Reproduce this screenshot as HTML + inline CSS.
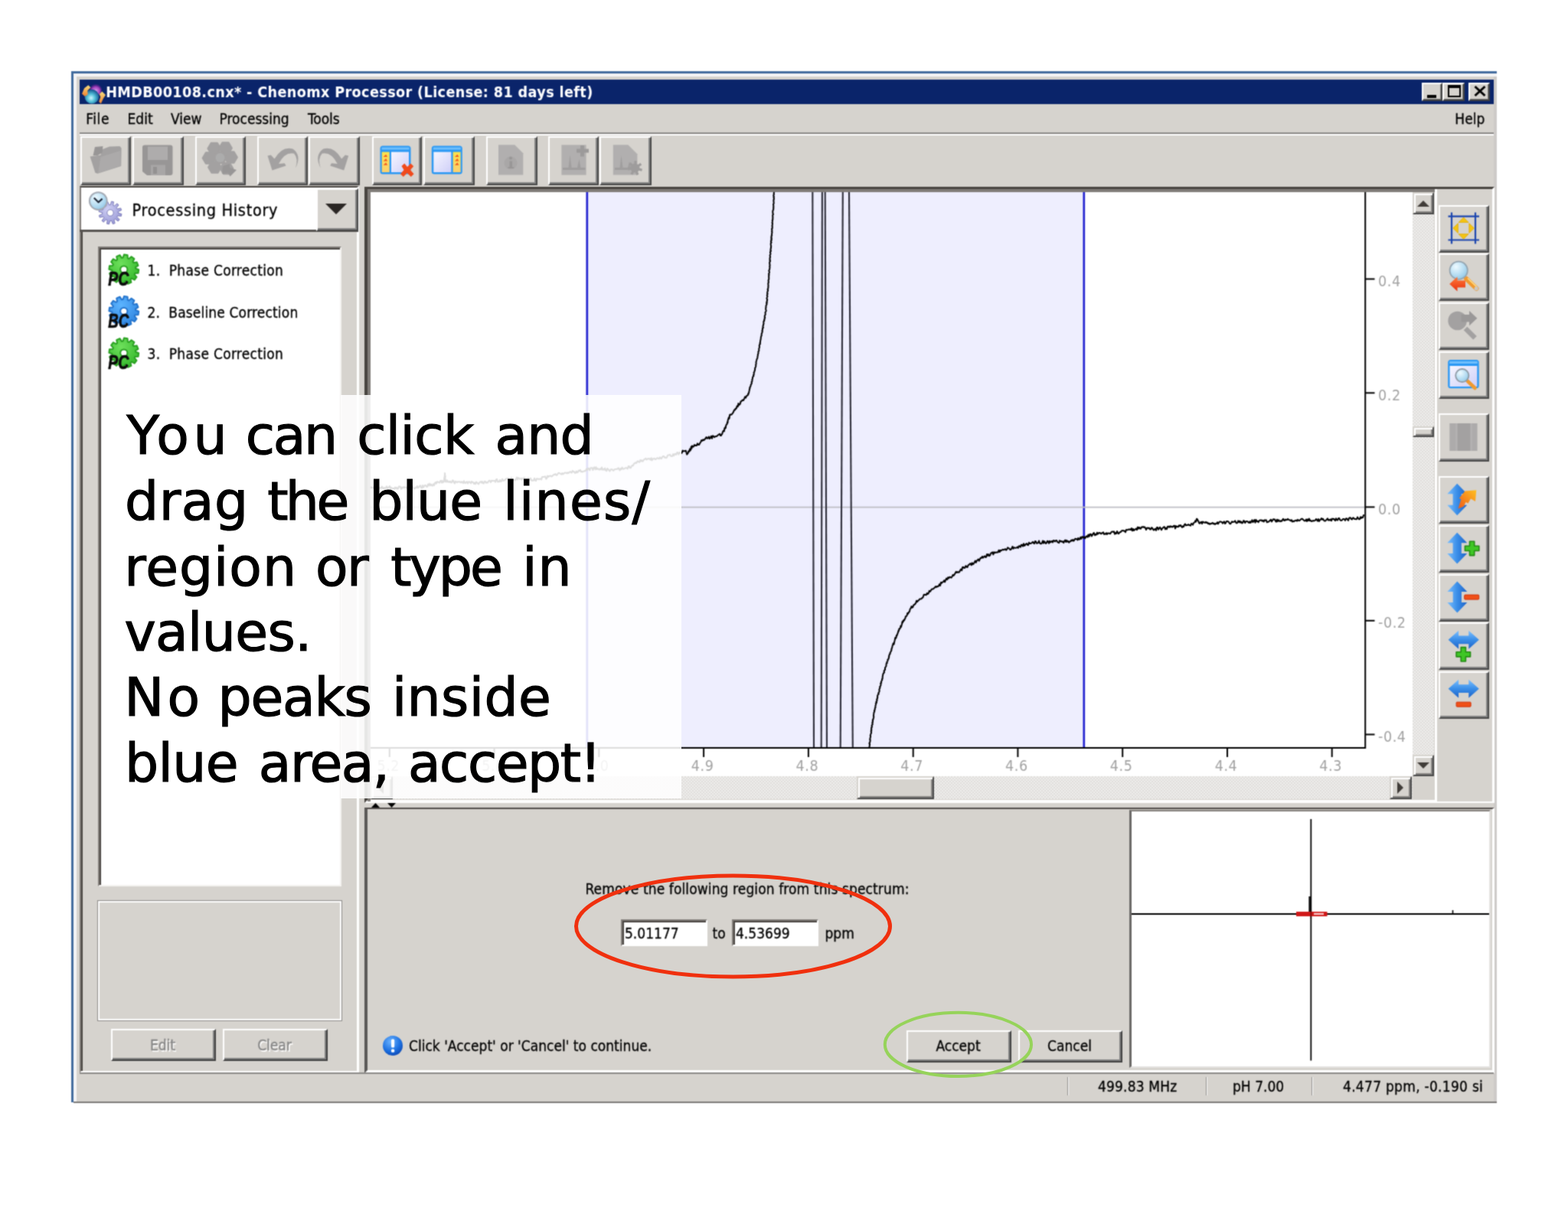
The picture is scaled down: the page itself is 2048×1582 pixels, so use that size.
<!DOCTYPE html>
<html lang="en">
<head>
<meta charset="utf-8">
<title>HMDB00108.cnx* - Chenomx Processor</title>
<style>
*{box-sizing:border-box;margin:0;padding:0}
html,body{width:2048px;height:1582px;background:#fff;overflow:hidden}
body{position:relative;-webkit-text-stroke:0.3px currentColor;font-family:"DejaVu Sans Condensed","DejaVu Sans","Liberation Sans",sans-serif;font-size:19px;color:#000}
.a{position:absolute}
.t{position:absolute;white-space:pre;line-height:1;filter:grayscale(1)}
svg text{filter:grayscale(1)}
.win{left:100px;top:100px;width:1851px;height:1339px;background:#d6d3ce}
.raised{position:absolute;background:#d6d3ce;border-style:solid;border-width:2px;border-color:#fff #404040 #404040 #fff;box-shadow:inset -2px -2px 0 #808080}
.raised2{position:absolute;background:#d6d3ce;border-style:solid;border-width:2px;border-color:#d6d3ce #484848 #484848 #d6d3ce;box-shadow:inset 2px 2px 0 #fff,inset -2px -2px 0 #868482}
.sunken{position:absolute;border-style:solid;border-width:2px;border-color:#808080 #fff #fff #808080;box-shadow:inset 2px 2px 0 #404040}
.tb{position:absolute;top:178px;width:66px;height:64px;background:#d6d3ce;border-style:solid;border-width:2px;border-color:#fff #484848 #484848 #fff;box-shadow:inset -2px -2px 0 #848484}
.rb{position:absolute;left:1879px;width:66px;height:62px;background:#d6d3ce;border-style:solid;border-width:2px;border-color:#fff #484848 #484848 #fff;box-shadow:inset -2px -2px 0 #848484}
.chk{background-color:#efeeec;background-image:linear-gradient(45deg,#dfdddb 25%,transparent 25%,transparent 75%,#dfdddb 75%),linear-gradient(45deg,#dfdddb 25%,transparent 25%,transparent 75%,#dfdddb 75%);background-size:4px 4px;background-position:0 0,2px 2px}
svg{position:absolute;overflow:visible}
</style>
</head>
<body>
<svg width="0" height="0" style="left:0;top:0"><defs><filter id="uisoft" x="0" y="0" width="100%" height="100%" color-interpolation-filters="sRGB"><feConvolveMatrix order="3" kernelMatrix="1 3 1 3 9 3 1 3 1" divisor="25" edgeMode="duplicate" preserveAlpha="false"/></filter></defs></svg>
<div class="a ui" style="left:0;top:0;width:2048px;height:1582px;filter:url(#uisoft)">
<!-- window frame -->
<div class="a" style="left:93px;top:93px;width:1862px;height:1347px;background:#416b9d"></div>
<div class="a" style="left:96px;top:96px;width:1859px;height:1344px;background:#f4f4f6"></div>
<div class="a win"></div>
<div class="a" style="left:1951px;top:100px;width:4px;height:1340px;background:#cdcac8"></div>
<div class="a" style="left:96px;top:1439px;width:1859px;height:2px;background:#7a7876"></div>

<!-- title bar -->
<div class="a" style="left:104px;top:104px;width:1847px;height:32px;background:#0a246a"></div>
<svg style="left:106px;top:105.5px" width="33" height="31" viewBox="0 0 32 30">
  <defs>
    <radialGradient id="gGlobe" cx="0.45" cy="0.6" r="0.6"><stop offset="0" stop-color="#d0f6ff"/><stop offset="0.45" stop-color="#52c0d8"/><stop offset="1" stop-color="#13508e"/></radialGradient>
    <radialGradient id="gPurp" cx="0.5" cy="0.6" r="0.6"><stop offset="0" stop-color="#dca8f6"/><stop offset="0.6" stop-color="#a03cb8"/><stop offset="1" stop-color="#4a1480" stop-opacity="0.3"/></radialGradient>
    <linearGradient id="gOr" x1="0" y1="0" x2="0" y2="1"><stop offset="0" stop-color="#f8e080"/><stop offset="1" stop-color="#f08030"/></linearGradient>
  </defs>
  <circle cx="18.5" cy="11" r="7.5" fill="url(#gPurp)"/>
  <circle cx="13.5" cy="19.5" r="9" fill="url(#gGlobe)"/>
  <path d="M1 16 L4 9 L9 5 L12 8 L8 12 L8.5 17 L4.5 19 Z" fill="url(#gOr)"/>
  <path d="M26.5 13 L31 17.5 L28 22 L25 28.5 L22.5 26 L24.5 20 L23 16.5 Z" fill="url(#gOr)"/>
</svg>
<div class="t" style="left:138.2px;top:110px;font-weight:bold;font-size:19.6px;letter-spacing:0.38px;color:#fff;-webkit-text-stroke:0;line-height:22px">HMDB00108.cnx* - Chenomx Processor (License: 81 days left)</div>
<!-- caption buttons -->
<div class="a" style="left:1857px;top:108px;width:27px;height:24px;background:#d6d3ce;border-style:solid;border-width:2px;border-color:#fff #404040 #404040 #fff;box-shadow:inset -1px -1px 0 #808080"></div>
<div class="a" style="left:1884px;top:108px;width:29px;height:24px;background:#d6d3ce;border-style:solid;border-width:2px;border-color:#fff #404040 #404040 #fff;box-shadow:inset -1px -1px 0 #808080"></div>
<div class="a" style="left:1918px;top:108px;width:28px;height:24px;background:#d6d3ce;border-style:solid;border-width:2px;border-color:#fff #404040 #404040 #fff;box-shadow:inset -1px -1px 0 #808080"></div>
<div class="a" style="left:1864px;top:124px;width:12px;height:4px;background:#000"></div>
<div class="a" style="left:1891px;top:111px;width:17px;height:16px;border:2px solid #000;border-top-width:4px"></div>
<svg style="left:1925px;top:112px" width="16" height="14" viewBox="0 0 16 14"><path d="M1.5 1 L14.5 13 M14.5 1 L1.5 13" stroke="#000" stroke-width="3" fill="none"/></svg>

<!-- menu bar -->
<div class="t" style="left:112.2px;top:144px;line-height:22px;letter-spacing:0.6px">File</div>
<div class="t" style="left:166.5px;top:144px;line-height:22px">Edit</div>
<div class="t" style="left:223px;top:144px;line-height:22px">View</div>
<div class="t" style="left:286.5px;top:144px;line-height:22px">Processing</div>
<div class="t" style="left:402px;top:144px;line-height:22px">Tools</div>
<div class="t" style="left:1900.2px;top:144px;line-height:22px;letter-spacing:0.1px">Help</div>
<div class="a" style="left:104px;top:173px;width:1847px;height:1.6px;background:#8a8886"></div>
<div class="a" style="left:104px;top:174.6px;width:1847px;height:2px;background:#fff"></div>

<!-- toolbar buttons -->
<div class="tb" style="left:105px"></div>
<div class="tb" style="left:173px;width:67px"></div>
<div class="tb" style="left:255px"></div>
<div class="tb" style="left:336px"></div>
<div class="tb" style="left:403px;width:67px"></div>
<div class="tb" style="left:486px;width:65px"></div>
<div class="tb" style="left:553px;width:67px"></div>
<div class="tb" style="left:635px;width:67px"></div>
<div class="tb" style="left:716px"></div>
<div class="tb" style="left:783px;width:68px"></div>
<!-- left panel -->
<div class="a" style="left:104px;top:242.5px;width:365.3px;height:1159.5px;border-style:solid;border-width:2px 3px 3px 2px;border-color:#46423e #fff #fff #807c78;box-shadow:inset 2px 0 0 #484440"></div>
<!-- combo -->
<div class="a" style="left:106px;top:244.5px;width:360px;height:56px;background:#fff"></div>
<div class="a" style="left:104px;top:299.5px;width:364.3px;height:3.6px;background:#55524f"></div>
<div class="a" style="left:412.5px;top:245.5px;width:55.8px;height:56px;background:#d6d3ce;border-style:solid;border-width:2px;border-color:#fff #484848 #484848 #fff;box-shadow:inset -2px -2px 0 #848484"></div>
<svg style="left:424px;top:265px" width="30" height="16" viewBox="0 0 30 16"><path d="M1 1 L29 1 L15 15 Z" fill="#2a2624"/></svg>
<div class="t" style="left:172.5px;top:262px;font-size:21.5px;letter-spacing:0.7px;line-height:26px">Processing History</div>
<!-- list box -->
<div class="a" style="left:128px;top:322px;width:318px;height:836px;background:#fff;border-style:solid;border-width:2px;border-color:#807c78 #f4f2f0 #f4f2f0 #807c78;box-shadow:inset 2px 2px 0 #484440"></div>
<div class="t" style="left:192.5px;top:342px;line-height:22px;letter-spacing:0.28px">1.  Phase Correction</div>
<div class="t" style="left:192.5px;top:396.5px;line-height:22px;letter-spacing:0.15px">2.  Baseline Correction</div>
<div class="t" style="left:192.5px;top:451px;line-height:22px;letter-spacing:0.28px">3.  Phase Correction</div>
<!-- group box -->
<div class="a" style="left:128px;top:1177px;width:318px;height:156px;border:2px solid #fff;box-shadow:0 0 0 1px #8a8886, inset 0 0 0 0 #fff"></div>
<!-- Edit / Clear -->
<div class="raised" style="left:145px;top:1344px;width:137px;height:42px"></div>
<div class="raised" style="left:291px;top:1344px;width:137px;height:42px"></div>
<div class="t" style="left:145px;top:1353px;width:135px;text-align:center;line-height:24px;color:#8a8784;text-shadow:1.5px 1.5px 0 #fff">Edit</div>
<div class="t" style="left:291px;top:1353px;width:135px;text-align:center;line-height:24px;color:#8a8784;text-shadow:1.5px 1.5px 0 #fff">Clear</div>
<!-- plot panel (sunken) -->
<div class="a" style="left:476px;top:244px;width:1476px;height:805px;border-style:solid;border-width:3px 3px 4px 4px;border-color:#484440 #fff #fff #484440"></div>
<div class="a" style="left:480px;top:247px;width:1394px;height:4px;background:#807c78"></div>
<div class="a" style="left:480px;top:247px;width:4px;height:800px;background:#807c78"></div>
<div class="a" style="left:484px;top:251px;width:1389px;height:793px;background:#fff"></div>
<!-- spectrum plot -->
<svg style="left:484px;top:251px" width="1361" height="763" viewBox="484 251 1361 763">
<rect x="484" y="251" width="1361" height="763" fill="#fff"/>
<rect x="767" y="251" width="649" height="726" fill="#eeeefe"/>
<line x1="766.8" y1="251" x2="766.8" y2="977" stroke="#2222d0" stroke-width="2.7"/>
<line x1="1415.8" y1="251" x2="1415.8" y2="977" stroke="#2222d0" stroke-width="2.7"/>
<line x1="484" y1="662.7" x2="1783" y2="662.7" stroke="#bdbdc4" stroke-width="1.8"/>
<line x1="1061.3" y1="251" x2="1063" y2="977" stroke="#2c2c38" stroke-width="2.1"/>
<line x1="1073.9" y1="251" x2="1072.7" y2="977" stroke="#2c2c38" stroke-width="2.1"/>
<line x1="1077.7" y1="251" x2="1080" y2="977" stroke="#2c2c38" stroke-width="2.1"/>
<line x1="1100.8" y1="251" x2="1097.7" y2="977" stroke="#2c2c38" stroke-width="2.1"/>
<line x1="1109" y1="251" x2="1113.8" y2="977" stroke="#2c2c38" stroke-width="2.1"/>
<path d="M484.0 636.0 L485.0 637.2 L486.0 636.5 L487.0 637.4 L488.0 637.5 L489.0 635.3 L490.0 635.1 L491.0 638.3 L492.0 636.0 L493.0 635.9 L494.0 639.0 L495.0 636.9 L496.0 638.3 L497.0 636.9 L498.0 637.6 L499.0 635.6 L500.0 637.5 L501.0 638.5 L502.0 637.1 L503.0 638.0 L504.0 637.7 L505.0 635.3 L506.0 638.0 L507.0 637.4 L508.0 636.2 L509.0 635.1 L510.0 638.5 L511.0 636.9 L512.0 637.9 L513.0 638.5 L514.0 637.9 L515.0 638.7 L516.0 636.6 L517.0 638.2 L518.0 636.8 L519.0 638.7 L520.0 638.5 L521.0 635.4 L522.0 635.5 L523.0 635.9 L524.0 638.9 L525.0 636.7 L526.0 637.5 L527.0 636.2 L528.0 637.0 L529.0 636.5 L530.0 636.4 L531.0 637.3 L532.0 637.3 L533.0 638.6 L534.0 637.7 L535.0 638.6 L536.0 638.2 L537.0 638.7 L538.0 637.3 L539.0 635.2 L540.0 637.9 L541.0 638.3 L542.0 638.0 L543.0 636.6 L544.0 637.1 L545.0 635.0 L546.0 637.4 L547.0 636.3 L548.0 635.1 L549.0 634.1 L550.0 637.2 L551.0 637.7 L552.0 634.0 L553.0 636.8 L554.0 635.1 L555.0 633.8 L556.0 634.2 L557.0 635.8 L558.0 635.9 L559.0 632.4 L560.0 634.4 L561.0 631.8 L562.0 634.3 L563.0 632.5 L564.0 634.4 L565.0 634.5 L566.0 632.4 L567.0 634.1 L568.0 631.1 L569.0 629.9 L570.0 631.7 L571.0 629.2 L572.0 629.6 L573.0 630.2 L574.0 630.7 L575.0 628.6 L576.0 627.8 L577.0 630.7 L578.0 628.1 L579.0 630.2 L580.4 628.0 L580.0 627.0 L580.2 626.0 L580.3 625.0 L580.5 624.0 L580.6 623.0 L580.7 622.0 L580.8 621.0 L581.2 620.0 L580.9 619.0 L580.9 618.0 L581.3 619.0 L580.9 620.0 L581.1 621.0 L581.8 622.0 L581.5 623.0 L581.6 624.0 L581.1 625.0 L581.6 626.0 L581.9 627.0 L581.4 628.0 L582.0 629.5 L583.0 629.6 L584.0 627.4 L585.0 629.7 L586.0 629.1 L587.0 630.0 L588.0 628.7 L589.0 630.2 L590.0 630.4 L591.0 627.6 L592.0 627.8 L593.0 630.3 L594.0 631.5 L595.0 628.7 L596.0 629.6 L597.0 630.2 L598.0 629.2 L599.0 629.4 L600.0 629.3 L601.0 629.5 L602.0 630.5 L603.0 629.3 L604.0 629.7 L605.0 631.3 L606.0 628.3 L607.0 630.6 L608.0 631.3 L609.0 629.6 L610.0 629.3 L611.0 631.7 L612.0 629.4 L613.0 629.3 L614.0 630.3 L615.0 631.4 L616.0 629.0 L617.0 630.0 L618.0 630.1 L619.0 632.1 L620.0 630.6 L621.0 632.3 L622.0 629.6 L623.0 630.3 L624.0 631.6 L625.0 632.5 L626.0 630.7 L627.0 629.6 L628.0 629.1 L629.0 630.6 L630.0 629.1 L631.0 631.4 L632.0 631.4 L633.0 628.7 L634.0 628.9 L635.0 630.9 L636.0 630.1 L637.0 630.6 L638.0 628.7 L639.0 627.7 L640.0 628.2 L641.0 630.1 L642.0 627.8 L643.0 628.0 L644.0 628.2 L645.0 628.0 L646.0 627.9 L647.0 629.8 L648.0 626.6 L649.0 625.8 L650.0 629.5 L651.0 629.1 L652.0 629.4 L653.0 627.0 L654.0 629.0 L655.0 628.7 L656.0 625.8 L657.0 627.7 L658.0 628.0 L659.0 627.2 L660.0 626.5 L661.0 625.5 L662.0 625.7 L663.0 625.2 L664.0 624.5 L665.0 626.5 L666.0 625.2 L667.0 627.3 L668.0 624.1 L669.0 627.5 L670.0 626.6 L671.0 627.5 L672.0 627.3 L673.0 627.3 L674.0 625.9 L675.0 623.6 L676.0 626.5 L677.0 624.1 L678.0 624.6 L679.0 626.0 L680.0 625.3 L681.0 624.8 L682.0 626.9 L683.0 625.5 L684.0 624.4 L685.0 624.1 L686.0 626.7 L687.0 625.3 L688.0 626.6 L689.0 625.0 L690.0 624.5 L691.0 626.0 L692.0 627.2 L693.0 624.7 L694.0 627.3 L695.0 628.0 L696.0 627.6 L697.0 627.8 L698.0 624.7 L699.0 627.3 L700.0 628.3 L701.0 625.2 L702.0 625.8 L703.0 625.5 L704.0 626.3 L705.1 625.6 L706.1 625.6 L707.1 626.5 L708.1 623.1 L709.1 623.1 L710.1 623.1 L711.1 622.8 L712.1 622.3 L713.2 625.7 L714.2 624.9 L715.2 621.6 L716.2 623.0 L717.2 622.0 L718.2 621.7 L719.2 621.6 L720.2 622.5 L721.3 622.0 L722.3 620.8 L723.3 619.9 L724.3 620.2 L725.3 619.1 L726.3 620.5 L727.3 620.9 L728.3 619.3 L729.4 617.8 L730.4 617.9 L731.4 618.5 L732.4 619.1 L733.4 619.7 L734.4 618.0 L735.5 619.5 L736.5 618.6 L737.5 617.7 L738.5 617.4 L739.5 617.7 L740.6 618.4 L741.6 617.2 L742.6 618.1 L743.6 617.1 L744.6 616.1 L745.7 617.1 L746.7 617.6 L747.7 615.0 L748.7 616.2 L749.7 616.1 L750.7 617.8 L751.8 617.9 L752.8 615.5 L753.8 617.4 L754.8 616.9 L755.8 614.6 L756.9 615.3 L757.9 613.8 L758.9 616.4 L759.9 615.7 L760.9 616.5 L762.0 615.9 L763.0 615.3 L764.0 615.4 L765.0 614.6 L766.1 612.5 L767.1 614.3 L768.2 611.7 L769.2 612.1 L770.3 614.4 L771.3 611.3 L772.4 611.3 L773.4 611.2 L774.4 614.1 L775.5 611.1 L776.5 610.3 L777.6 613.3 L778.6 610.3 L779.7 613.0 L780.7 612.1 L781.8 612.9 L782.8 613.6 L783.9 612.3 L784.9 613.4 L786.0 610.5 L787.0 613.6 L788.1 612.8 L789.1 613.8 L790.1 611.6 L791.2 614.3 L792.2 615.3 L793.3 612.0 L794.4 613.2 L795.4 614.4 L796.5 615.6 L797.5 613.5 L798.5 613.1 L799.5 613.2 L800.5 614.5 L801.5 614.8 L802.5 613.2 L803.5 613.0 L804.6 612.9 L805.6 612.6 L806.6 612.7 L807.6 611.2 L808.6 612.7 L809.6 614.4 L810.6 612.0 L811.6 613.1 L812.6 610.6 L813.6 612.6 L814.6 612.7 L815.6 612.2 L816.7 611.4 L817.7 611.1 L818.7 611.5 L819.7 612.4 L820.7 609.2 L821.7 608.9 L822.7 611.3 L823.8 611.3 L824.8 609.0 L825.9 608.0 L826.9 608.4 L828.0 605.6 L829.0 605.2 L830.0 604.3 L831.1 605.1 L832.1 603.3 L833.2 602.3 L834.2 603.5 L835.3 603.8 L836.3 601.0 L837.3 602.5 L838.4 601.2 L839.4 602.8 L840.4 601.5 L841.4 600.1 L842.4 599.7 L843.5 598.8 L844.5 600.5 L845.5 599.9 L846.5 598.9 L847.6 599.5 L848.6 599.2 L849.6 600.8 L850.6 598.2 L851.6 601.4 L852.7 599.2 L853.7 599.5 L854.7 598.8 L855.7 600.1 L856.7 599.9 L857.8 598.7 L858.8 598.2 L859.8 599.0 L860.8 599.4 L861.9 597.4 L862.9 598.6 L863.9 599.3 L864.9 597.2 L865.9 596.1 L867.0 596.0 L868.0 597.7 L869.0 597.4 L870.0 598.3 L871.0 597.6 L872.0 594.9 L873.1 594.4 L874.1 594.5 L875.1 593.9 L876.1 595.7 L877.1 596.1 L878.1 596.0 L879.1 593.2 L880.2 595.4 L881.2 592.9 L882.2 593.1 L883.2 594.0 L884.2 591.2 L885.2 591.0 L886.3 593.7 L887.3 591.3 L888.3 591.3 L889.3 591.9 L890.4 591.8 L891.6 588.6 L892.7 589.4 L893.9 589.3 L895.0 588.9 L895.8 588.8 L896.5 591.3 L897.2 593.8 L898.0 592.6 L898.6 592.2 L899.2 589.5 L899.8 589.1 L900.4 589.7 L901.0 586.5 L901.6 588.5 L902.2 587.6 L902.8 583.4 L903.4 585.8 L904.0 582.5 L905.0 583.7 L906.0 583.3 L907.0 581.1 L908.0 582.2 L909.0 581.7 L910.0 582.0 L911.0 579.4 L912.0 581.0 L913.1 581.0 L914.1 579.0 L915.2 577.6 L916.2 575.1 L917.3 575.8 L918.3 574.4 L919.4 575.0 L920.4 574.0 L921.5 572.8 L922.6 571.0 L923.6 572.7 L924.7 572.5 L925.8 570.5 L926.8 573.1 L927.9 572.0 L928.9 569.7 L930.0 572.7 L931.0 569.3 L932.0 569.8 L933.0 571.1 L934.0 570.4 L935.0 570.0 L936.0 570.1 L937.0 569.1 L938.0 568.2 L939.0 567.5 L940.0 566.8 L941.0 569.1 L942.0 569.0 L942.6 567.2 L943.2 567.0 L943.9 564.4 L944.5 563.1 L945.1 562.5 L945.8 563.5 L946.4 559.2 L947.0 560.0 L947.4 558.0 L947.8 559.1 L948.1 556.4 L948.5 555.3 L948.9 554.6 L949.3 554.1 L949.6 554.0 L950.0 551.3 L950.4 552.3 L950.8 548.3 L951.2 548.0 L951.5 546.3 L951.9 545.3 L952.3 547.0 L952.7 545.7 L953.0 542.6 L953.4 541.6 L953.8 541.5 L954.8 541.8 L955.9 541.1 L956.9 539.9 L957.9 538.3 L959.0 535.6 L960.0 535.6 L960.6 533.8 L961.2 534.1 L961.9 533.3 L962.5 530.8 L963.1 530.0 L963.8 531.1 L964.4 527.1 L965.0 529.2 L965.8 528.6 L966.7 527.8 L967.5 524.5 L968.3 524.2 L969.2 523.3 L970.0 522.5 L971.0 523.0 L972.1 520.9 L973.1 518.4 L974.1 519.7 L975.1 517.2 L976.2 516.7 L977.4 515.4 L977.0 514.4 L978.1 513.4 L978.2 512.3 L978.4 511.3 L978.7 510.3 L978.9 509.3 L978.9 508.3 L979.5 507.2 L979.3 506.2 L980.1 505.2 L980.5 504.2 L980.6 503.2 L981.0 502.1 L981.7 501.1 L981.9 500.1 L981.5 499.1 L982.4 498.1 L982.5 497.0 L982.3 496.0 L982.9 495.0 L983.0 494.0 L983.0 493.0 L983.7 491.9 L984.4 490.9 L984.0 489.9 L984.8 488.9 L984.8 487.9 L984.5 486.8 L985.4 485.8 L985.4 484.8 L986.0 483.8 L986.0 482.8 L986.2 481.8 L986.1 480.7 L986.8 479.7 L987.1 478.7 L987.3 477.7 L987.1 476.7 L987.6 475.6 L987.6 474.6 L987.5 473.6 L987.6 472.6 L987.9 471.6 L988.2 470.5 L988.4 469.5 L989.0 468.5 L989.4 467.5 L989.4 466.5 L989.5 465.5 L989.9 464.4 L989.8 463.4 L990.1 462.4 L990.6 461.4 L990.4 460.4 L990.4 459.4 L991.3 458.3 L991.3 457.3 L991.2 456.3 L991.4 455.3 L991.7 454.3 L992.0 453.3 L991.8 452.2 L991.8 451.2 L992.2 450.2 L993.0 449.2 L992.5 448.2 L993.0 447.2 L993.0 446.1 L993.2 445.1 L993.3 444.1 L993.7 443.1 L993.7 442.1 L993.8 441.1 L994.0 440.0 L994.3 439.0 L994.8 438.0 L994.6 437.0 L994.7 436.0 L995.3 435.0 L995.4 434.0 L995.9 433.0 L995.4 432.0 L995.9 431.0 L996.1 430.0 L995.9 429.0 L997.0 428.0 L996.4 427.0 L996.5 426.0 L997.0 425.0 L996.9 424.0 L997.5 423.0 L997.4 422.0 L997.3 421.0 L997.4 420.0 L998.3 419.0 L998.0 418.0 L998.7 417.0 L998.5 416.0 L999.2 415.0 L998.7 414.0 L998.8 413.0 L999.0 412.0 L999.7 411.0 L999.7 410.0 L999.6 409.0 L999.5 408.0 L1000.3 407.0 L1000.7 406.0 L1000.5 405.0 L1000.1 404.0 L1000.2 403.0 L1000.4 402.0 L1000.5 401.0 L1000.5 400.0 L1000.6 399.0 L1001.3 398.0 L1001.6 397.0 L1001.0 396.0 L1001.9 395.0 L1001.4 394.0 L1001.9 393.0 L1002.1 392.0 L1002.2 391.0 L1001.4 390.0 L1001.7 389.0 L1002.1 388.0 L1002.5 387.0 L1001.8 386.0 L1002.0 385.0 L1002.7 384.0 L1002.0 383.0 L1002.4 382.0 L1002.4 381.0 L1002.9 380.0 L1003.2 379.0 L1002.5 378.0 L1003.2 377.0 L1003.3 376.0 L1003.5 375.0 L1003.3 374.0 L1003.7 373.0 L1003.3 372.0 L1003.4 371.0 L1003.3 370.0 L1003.9 369.0 L1003.7 368.0 L1003.6 367.0 L1003.6 366.0 L1004.2 365.0 L1004.2 364.0 L1004.3 363.0 L1004.1 362.0 L1004.3 361.0 L1004.0 360.0 L1004.6 359.0 L1004.0 358.0 L1004.5 357.0 L1004.9 356.0 L1004.9 355.0 L1004.3 354.0 L1004.5 353.0 L1005.2 352.0 L1005.1 351.0 L1005.4 350.0 L1005.5 349.0 L1005.1 348.0 L1005.6 347.0 L1005.5 345.9 L1005.2 344.9 L1005.3 343.9 L1005.1 342.9 L1005.5 341.9 L1006.1 340.9 L1005.3 339.9 L1005.8 338.9 L1005.4 337.9 L1005.5 336.9 L1006.1 335.9 L1005.8 334.9 L1005.6 333.9 L1005.8 332.9 L1006.4 331.9 L1006.4 330.9 L1005.9 329.9 L1006.2 328.9 L1007.0 327.9 L1006.3 326.9 L1006.7 325.9 L1006.6 324.8 L1007.1 323.8 L1006.9 322.8 L1007.2 321.8 L1007.0 320.7 L1006.7 319.7 L1006.8 318.7 L1006.8 317.7 L1007.6 316.6 L1006.9 315.6 L1006.9 314.6 L1007.9 313.6 L1007.2 312.5 L1008.0 311.5 L1007.2 310.5 L1007.7 309.5 L1007.5 308.4 L1008.2 307.4 L1008.0 306.4 L1008.1 305.4 L1008.3 304.3 L1008.5 303.3 L1008.0 302.3 L1008.4 301.3 L1008.3 300.2 L1008.0 299.2 L1008.8 298.2 L1008.6 297.2 L1008.9 296.1 L1008.4 295.1 L1008.8 294.1 L1008.8 293.1 L1009.1 292.0 L1008.5 291.0 L1008.8 290.0 L1009.0 289.0 L1008.7 288.0 L1009.2 287.0 L1009.4 286.0 L1009.2 285.0 L1009.4 284.0 L1009.4 283.0 L1009.1 282.0 L1009.3 281.0 L1010.0 280.0 L1009.4 279.0 L1009.5 278.0 L1009.2 277.0 L1009.4 276.0 L1009.4 275.0 L1010.2 274.0 L1010.1 273.0 L1010.3 272.0 L1010.4 271.0 L1010.1 270.0 L1010.5 269.0 L1010.1 268.0 L1010.0 267.0 L1010.6 266.0 L1010.6 265.0 L1010.7 264.0 L1010.3 263.0 L1010.6 262.0 L1010.3 261.0 L1011.0 260.0 L1010.9 259.0 L1010.4 258.0 L1011.0 257.0 L1010.3 256.0 L1010.3 255.0 L1011.0 254.0 L1010.6 253.0 L1010.9 252.0 L1010.9 251.0" fill="none" stroke="#000" stroke-width="2.0" stroke-linejoin="round"/>
<path d="M1135.1 977.2 L1135.4 976.2 L1135.6 975.2 L1135.9 974.1 L1135.8 973.1 L1136.1 972.1 L1135.4 971.1 L1135.9 970.0 L1136.5 969.0 L1136.4 968.0 L1136.8 967.0 L1136.1 965.9 L1136.6 964.9 L1136.5 963.9 L1137.0 962.9 L1137.1 961.8 L1136.7 960.8 L1137.1 959.8 L1137.3 958.8 L1138.0 957.8 L1138.0 956.7 L1137.6 955.7 L1138.3 954.7 L1137.8 953.7 L1138.4 952.6 L1138.1 951.6 L1138.1 950.6 L1139.1 949.6 L1138.6 948.5 L1138.7 947.5 L1139.6 946.5 L1139.7 945.5 L1139.2 944.4 L1140.0 943.4 L1139.7 942.4 L1140.1 941.4 L1139.8 940.4 L1140.7 939.3 L1140.7 938.3 L1141.1 937.3 L1141.3 936.3 L1140.9 935.3 L1141.1 934.3 L1141.1 933.2 L1141.3 932.2 L1141.4 931.2 L1141.8 930.2 L1142.3 929.2 L1141.9 928.1 L1142.8 927.1 L1142.7 926.1 L1142.8 925.1 L1143.5 924.1 L1143.4 923.1 L1143.4 922.0 L1143.8 921.0 L1144.2 920.0 L1143.8 919.0 L1145.0 917.9 L1144.3 916.9 L1145.2 915.8 L1145.6 914.8 L1145.0 913.8 L1146.0 912.7 L1145.8 911.7 L1146.3 910.7 L1146.0 909.6 L1146.3 908.6 L1146.7 907.5 L1147.7 906.5 L1147.2 905.5 L1148.0 904.4 L1148.4 903.4 L1148.7 902.4 L1148.3 901.3 L1148.6 900.3 L1149.0 899.2 L1149.5 898.2 L1149.1 897.2 L1150.0 896.2 L1150.3 895.2 L1150.6 894.2 L1150.1 893.1 L1151.2 892.1 L1150.7 891.1 L1151.2 890.1 L1151.7 889.1 L1152.3 888.1 L1152.0 887.1 L1152.8 886.1 L1152.7 885.1 L1152.7 884.0 L1153.0 883.0 L1153.1 882.0 L1153.3 881.0 L1153.6 880.0 L1154.5 879.0 L1155.1 878.0 L1154.6 877.0 L1154.8 876.0 L1156.1 875.0 L1155.9 874.0 L1156.1 873.0 L1156.2 872.0 L1156.9 871.0 L1157.5 870.0 L1157.4 869.0 L1157.7 868.0 L1157.6 867.0 L1158.8 866.0 L1158.2 865.0 L1159.0 864.0 L1159.7 863.0 L1159.3 862.0 L1160.3 861.0 L1160.8 860.0 L1160.8 859.0 L1161.3 858.0 L1161.0 857.0 L1161.6 856.0 L1161.7 855.0 L1162.7 854.0 L1162.5 853.0 L1163.0 852.0 L1163.8 851.0 L1164.0 850.0 L1164.5 849.0 L1164.3 848.0 L1164.7 847.0 L1165.0 846.9 L1165.4 844.9 L1165.8 843.1 L1166.2 842.5 L1166.6 840.5 L1167.0 840.4 L1167.4 841.8 L1167.8 840.7 L1168.2 838.3 L1168.6 836.8 L1169.0 835.1 L1169.3 833.1 L1169.7 832.8 L1170.1 833.8 L1170.5 833.1 L1170.9 830.1 L1171.3 830.7 L1171.7 829.7 L1172.1 828.3 L1172.5 827.2 L1172.9 826.5 L1173.4 823.9 L1173.9 824.2 L1174.4 821.5 L1174.9 821.3 L1175.4 821.4 L1175.9 820.0 L1176.5 817.4 L1177.0 819.0 L1177.5 816.8 L1178.0 815.5 L1178.5 812.2 L1179.0 813.3 L1179.5 811.0 L1180.0 811.7 L1180.6 809.8 L1181.2 810.2 L1181.7 808.5 L1182.3 808.1 L1182.9 805.2 L1183.5 805.4 L1184.1 804.7 L1184.6 804.0 L1185.2 801.1 L1185.8 802.0 L1186.4 801.1 L1187.0 799.4 L1187.5 799.5 L1188.1 798.4 L1188.7 795.6 L1189.6 794.6 L1190.6 792.1 L1191.5 793.7 L1192.4 793.0 L1193.3 790.2 L1194.3 790.0 L1195.2 789.0 L1196.1 788.0 L1197.1 784.7 L1198.0 786.1 L1199.1 784.6 L1200.2 784.1 L1201.2 782.4 L1202.3 782.4 L1203.4 782.3 L1204.5 780.9 L1205.5 780.5 L1206.6 777.0 L1207.7 776.7 L1208.7 777.1 L1209.7 777.3 L1210.8 774.8 L1211.8 776.0 L1212.8 775.0 L1213.8 771.9 L1214.8 772.9 L1215.9 771.2 L1216.9 769.8 L1217.9 769.4 L1218.9 769.4 L1220.0 768.2 L1221.0 767.5 L1222.0 766.1 L1223.0 767.1 L1224.0 766.0 L1225.0 766.2 L1226.0 765.4 L1227.0 763.2 L1228.0 765.1 L1229.0 760.8 L1230.1 761.6 L1231.1 760.4 L1232.1 760.1 L1233.1 758.2 L1234.1 760.3 L1235.1 757.7 L1236.1 755.6 L1237.2 757.2 L1238.2 754.3 L1239.3 755.4 L1240.3 753.8 L1241.4 754.0 L1242.5 754.7 L1243.5 753.4 L1244.6 751.0 L1245.6 751.9 L1246.7 750.4 L1247.8 748.5 L1248.8 746.9 L1249.9 747.9 L1250.9 747.0 L1252.0 747.8 L1253.0 747.3 L1254.1 745.2 L1255.1 743.6 L1256.2 745.2 L1257.2 741.0 L1258.3 740.8 L1259.3 742.1 L1260.4 741.7 L1261.4 739.2 L1262.5 740.5 L1263.5 741.0 L1264.6 738.3 L1265.6 737.9 L1266.7 736.5 L1267.7 736.2 L1268.7 738.3 L1269.7 735.4 L1270.8 737.1 L1271.8 736.4 L1272.8 734.5 L1273.8 732.6 L1274.8 734.9 L1275.9 732.4 L1276.9 731.5 L1277.9 730.6 L1278.9 732.7 L1280.0 730.1 L1281.0 728.7 L1282.0 728.9 L1283.0 727.0 L1284.0 728.6 L1285.0 727.4 L1286.1 726.4 L1287.1 727.9 L1288.1 727.7 L1289.1 724.0 L1290.1 725.6 L1291.1 724.1 L1292.1 726.3 L1293.2 725.3 L1294.2 722.7 L1295.2 722.3 L1296.2 721.4 L1297.3 724.4 L1298.3 721.3 L1299.4 722.3 L1300.4 721.4 L1301.5 721.8 L1302.5 721.3 L1303.6 721.5 L1304.6 718.7 L1305.7 721.0 L1306.7 718.8 L1307.8 719.4 L1308.8 718.3 L1309.9 717.8 L1310.9 718.4 L1312.0 717.9 L1313.1 717.2 L1314.1 718.6 L1315.2 717.7 L1316.2 715.3 L1317.3 716.0 L1318.3 716.6 L1319.4 718.2 L1320.4 717.9 L1321.5 716.3 L1322.5 714.0 L1323.6 716.8 L1324.6 715.2 L1325.7 715.6 L1326.7 715.9 L1327.8 715.4 L1328.8 714.5 L1329.8 715.9 L1330.8 713.5 L1331.9 713.2 L1332.9 714.7 L1333.9 711.7 L1334.9 711.8 L1335.9 713.6 L1337.0 710.2 L1338.0 713.0 L1339.0 712.1 L1340.0 710.7 L1341.0 710.0 L1342.0 711.7 L1343.0 712.1 L1344.0 708.8 L1345.0 710.0 L1346.0 710.0 L1347.0 709.6 L1348.0 708.8 L1349.0 707.9 L1350.0 709.4 L1351.0 710.1 L1352.0 707.0 L1353.0 707.4 L1354.0 709.8 L1355.0 709.6 L1356.0 709.1 L1357.0 706.5 L1358.0 709.3 L1359.0 710.3 L1360.0 710.3 L1361.0 709.1 L1362.0 706.5 L1363.0 709.6 L1364.0 707.1 L1365.0 708.8 L1366.0 710.0 L1367.0 709.0 L1368.0 706.7 L1369.0 707.3 L1370.0 709.8 L1371.0 706.7 L1372.0 708.5 L1373.0 707.7 L1374.0 706.7 L1375.0 708.5 L1376.0 706.1 L1377.0 706.3 L1378.0 707.4 L1379.1 706.1 L1380.1 706.0 L1381.1 708.0 L1382.1 708.7 L1383.1 709.2 L1384.1 706.1 L1385.1 707.3 L1386.2 706.8 L1387.2 707.9 L1388.2 707.4 L1389.2 709.1 L1390.2 706.8 L1391.2 705.5 L1392.2 708.0 L1393.2 705.8 L1394.3 707.7 L1395.3 707.1 L1396.3 708.7 L1397.3 707.2 L1398.3 707.2 L1399.3 705.5 L1400.3 706.4 L1401.3 705.0 L1402.3 706.7 L1403.3 705.6 L1404.3 703.8 L1405.3 703.9 L1406.3 704.2 L1407.3 705.4 L1408.3 702.9 L1409.3 704.8 L1410.3 704.3 L1411.3 701.8 L1412.3 703.9 L1413.3 701.3 L1414.3 701.2 L1415.3 702.8 L1416.3 701.2 L1417.3 703.3 L1418.4 701.3 L1419.5 700.3 L1420.5 701.8 L1421.5 698.4 L1422.6 700.8 L1423.7 697.7 L1424.7 697.7 L1425.8 700.5 L1426.8 699.0 L1427.9 696.8 L1428.9 696.0 L1429.9 699.3 L1430.9 698.0 L1431.9 698.6 L1432.9 695.8 L1433.9 697.7 L1434.9 696.5 L1435.9 696.0 L1437.0 696.3 L1438.0 697.4 L1439.0 696.3 L1440.0 696.4 L1441.0 695.3 L1442.0 698.0 L1443.0 697.2 L1444.0 697.8 L1445.0 696.2 L1446.0 697.9 L1447.0 696.5 L1448.0 696.8 L1449.0 696.7 L1450.0 697.3 L1451.0 695.9 L1452.0 694.7 L1453.0 694.4 L1454.0 695.0 L1455.0 694.3 L1456.0 697.7 L1457.0 696.0 L1458.0 697.1 L1459.0 694.0 L1460.0 695.9 L1461.0 697.3 L1462.0 696.0 L1463.0 695.0 L1464.0 695.0 L1465.0 693.3 L1466.0 693.3 L1467.0 693.1 L1468.0 693.7 L1469.0 693.5 L1470.0 695.3 L1471.0 692.1 L1472.0 692.3 L1473.0 692.2 L1474.0 691.5 L1475.0 691.8 L1476.0 691.3 L1477.0 692.1 L1478.0 690.1 L1479.0 693.4 L1480.0 691.0 L1481.0 693.0 L1482.0 691.8 L1483.0 691.5 L1484.0 690.5 L1485.0 692.2 L1486.0 688.6 L1487.0 690.6 L1488.0 688.9 L1489.0 690.5 L1490.0 690.7 L1491.0 688.5 L1492.0 688.7 L1493.0 688.1 L1494.0 689.0 L1495.0 688.4 L1496.0 689.8 L1497.0 692.1 L1498.0 689.7 L1499.0 689.6 L1500.0 690.3 L1501.0 689.6 L1502.0 691.5 L1503.0 691.5 L1504.0 689.3 L1505.0 689.7 L1506.0 691.5 L1507.0 692.6 L1508.0 691.5 L1509.0 690.7 L1510.0 692.9 L1511.0 688.9 L1512.0 689.0 L1513.0 691.8 L1514.0 690.2 L1515.0 688.7 L1516.0 690.6 L1517.0 692.3 L1518.0 690.3 L1519.0 689.5 L1520.0 688.4 L1521.0 688.2 L1522.0 691.4 L1523.0 689.7 L1524.0 691.3 L1525.0 687.7 L1526.0 688.4 L1527.0 687.5 L1528.0 688.8 L1529.0 687.3 L1530.0 688.0 L1531.0 688.5 L1532.0 688.0 L1533.0 686.9 L1534.0 686.8 L1535.0 690.4 L1536.0 687.1 L1537.0 688.3 L1538.0 687.8 L1539.0 688.2 L1540.0 686.3 L1541.0 687.1 L1542.0 686.0 L1543.0 687.6 L1544.0 688.9 L1545.0 687.4 L1546.0 688.2 L1547.0 685.5 L1548.0 684.5 L1549.0 686.4 L1550.0 685.9 L1551.0 686.1 L1552.0 685.1 L1553.0 685.9 L1554.0 686.1 L1555.0 686.7 L1556.0 684.0 L1557.0 684.4 L1558.0 685.7 L1559.0 683.1 L1560.0 682.5 L1560.6 682.1 L1561.2 680.2 L1561.8 681.8 L1562.4 680.9 L1563.0 677.8 L1563.6 678.0 L1564.2 678.8 L1564.8 680.5 L1565.4 680.8 L1566.0 683.2 L1567.0 683.8 L1568.0 682.5 L1569.0 681.7 L1570.0 684.2 L1571.0 681.6 L1572.0 682.2 L1573.0 682.5 L1574.0 682.9 L1575.0 681.8 L1576.0 683.0 L1577.0 682.6 L1578.0 684.3 L1579.0 683.5 L1580.0 684.9 L1581.0 683.9 L1582.0 684.3 L1583.0 683.5 L1584.0 683.0 L1585.0 684.5 L1586.0 683.8 L1587.0 685.0 L1588.0 684.1 L1589.0 684.0 L1590.0 682.2 L1591.0 684.4 L1592.0 682.6 L1593.0 681.6 L1594.0 681.4 L1595.0 681.8 L1596.0 682.1 L1597.0 683.7 L1598.0 682.2 L1599.0 681.3 L1600.0 684.1 L1601.0 683.2 L1602.0 681.0 L1603.0 681.0 L1604.0 681.3 L1605.1 682.1 L1606.1 684.1 L1607.1 684.4 L1608.1 683.0 L1609.1 681.4 L1610.1 682.1 L1611.1 681.8 L1612.1 681.6 L1613.2 680.3 L1614.2 682.5 L1615.2 683.4 L1616.2 683.0 L1617.2 680.4 L1618.2 682.1 L1619.2 680.6 L1620.2 682.7 L1621.2 681.5 L1622.3 683.5 L1623.3 682.8 L1624.3 680.1 L1625.3 680.8 L1626.3 683.1 L1627.3 681.3 L1628.3 681.1 L1629.3 681.1 L1630.4 682.3 L1631.4 682.9 L1632.4 681.2 L1633.4 682.9 L1634.4 681.4 L1635.4 679.4 L1636.4 682.2 L1637.5 680.6 L1638.5 679.1 L1639.5 682.7 L1640.5 678.9 L1641.5 681.1 L1642.6 680.7 L1643.6 682.2 L1644.6 680.2 L1645.6 679.5 L1646.6 679.7 L1647.7 679.4 L1648.7 680.8 L1649.7 679.9 L1650.7 681.5 L1651.7 679.4 L1652.8 679.8 L1653.8 679.4 L1654.8 682.3 L1655.8 681.7 L1656.8 681.7 L1657.9 680.7 L1658.9 679.8 L1659.9 678.7 L1660.9 681.5 L1661.9 680.1 L1663.0 678.2 L1664.0 678.7 L1665.0 678.4 L1666.0 680.9 L1667.0 681.6 L1668.0 678.7 L1669.0 681.1 L1670.0 679.2 L1671.0 680.6 L1672.0 681.3 L1673.0 680.3 L1674.0 681.0 L1675.0 679.3 L1676.0 677.8 L1677.0 679.8 L1678.0 680.1 L1679.0 678.5 L1680.0 679.3 L1681.0 679.0 L1682.0 677.8 L1683.0 678.9 L1684.0 679.2 L1685.0 679.5 L1686.0 680.4 L1687.0 679.2 L1688.0 681.5 L1689.0 680.8 L1690.0 681.2 L1691.0 680.3 L1692.0 680.2 L1693.0 679.6 L1694.0 680.7 L1695.0 678.9 L1696.0 679.8 L1697.0 680.2 L1698.0 679.5 L1699.0 678.6 L1700.0 677.7 L1701.0 677.7 L1702.0 678.8 L1703.0 679.7 L1704.0 680.4 L1705.0 680.2 L1706.0 678.6 L1707.0 681.0 L1708.0 678.4 L1709.0 680.1 L1710.0 677.6 L1711.0 680.3 L1712.0 679.9 L1713.0 681.1 L1714.0 680.8 L1715.0 680.0 L1716.0 680.5 L1717.0 680.1 L1718.0 679.6 L1719.0 678.0 L1720.0 679.2 L1721.0 680.7 L1722.0 678.1 L1723.0 681.0 L1724.0 679.3 L1725.0 678.6 L1726.0 677.1 L1727.0 678.6 L1728.0 677.7 L1729.0 679.6 L1730.0 680.6 L1731.0 680.6 L1732.0 679.4 L1733.0 678.5 L1734.0 677.3 L1735.0 679.6 L1736.0 679.0 L1737.0 679.7 L1738.0 678.3 L1739.0 680.3 L1740.0 677.6 L1741.0 677.9 L1742.0 677.7 L1743.0 679.1 L1744.0 680.2 L1745.0 677.3 L1746.0 679.1 L1747.0 679.6 L1748.0 677.4 L1749.0 676.7 L1750.0 678.7 L1751.0 679.7 L1752.0 679.9 L1753.0 679.3 L1754.0 678.0 L1755.0 678.0 L1756.0 678.4 L1757.0 679.9 L1758.0 677.4 L1759.0 677.3 L1760.0 678.6 L1761.0 680.0 L1762.0 676.9 L1763.0 676.2 L1764.0 676.5 L1765.0 678.3 L1766.0 678.4 L1767.0 676.6 L1768.0 676.5 L1769.0 678.0 L1770.0 678.1 L1771.0 678.2 L1772.0 678.2 L1773.0 675.5 L1774.0 677.0 L1775.0 678.3 L1776.0 678.3 L1777.0 675.3 L1778.0 676.9 L1779.0 675.6 L1780.0 676.3 L1781.0 673.0 L1782.0 673.6" fill="none" stroke="#000" stroke-width="2.0" stroke-linejoin="round"/>
<line x1="484" y1="977" x2="1784" y2="977" stroke="#000" stroke-width="2"/>
<line x1="1783.2" y1="251" x2="1783.2" y2="978" stroke="#000" stroke-width="2"/>
<line x1="508.8" y1="977" x2="508.8" y2="989" stroke="#000" stroke-width="2"/>
<text x="507.3" y="1007" text-anchor="middle" font-size="19.5" fill="#a2a2a2" letter-spacing="0.6">5.2</text>
<line x1="645.6" y1="977" x2="645.6" y2="989" stroke="#000" stroke-width="2"/>
<text x="644.1" y="1007" text-anchor="middle" font-size="19.5" fill="#a2a2a2" letter-spacing="0.6">5.1</text>
<line x1="782.3" y1="977" x2="782.3" y2="989" stroke="#000" stroke-width="2"/>
<text x="780.8" y="1007" text-anchor="middle" font-size="19.5" fill="#a2a2a2" letter-spacing="0.6">5.0</text>
<line x1="919.1" y1="977" x2="919.1" y2="989" stroke="#000" stroke-width="2"/>
<text x="917.6" y="1007" text-anchor="middle" font-size="19.5" fill="#a2a2a2" letter-spacing="0.6">4.9</text>
<line x1="1055.9" y1="977" x2="1055.9" y2="989" stroke="#000" stroke-width="2"/>
<text x="1054.4" y="1007" text-anchor="middle" font-size="19.5" fill="#a2a2a2" letter-spacing="0.6">4.8</text>
<line x1="1192.7" y1="977" x2="1192.7" y2="989" stroke="#000" stroke-width="2"/>
<text x="1191.2" y="1007" text-anchor="middle" font-size="19.5" fill="#a2a2a2" letter-spacing="0.6">4.7</text>
<line x1="1329.4" y1="977" x2="1329.4" y2="989" stroke="#000" stroke-width="2"/>
<text x="1327.9" y="1007" text-anchor="middle" font-size="19.5" fill="#a2a2a2" letter-spacing="0.6">4.6</text>
<line x1="1466.2" y1="977" x2="1466.2" y2="989" stroke="#000" stroke-width="2"/>
<text x="1464.7" y="1007" text-anchor="middle" font-size="19.5" fill="#a2a2a2" letter-spacing="0.6">4.5</text>
<line x1="1603.0" y1="977" x2="1603.0" y2="989" stroke="#000" stroke-width="2"/>
<text x="1601.5" y="1007" text-anchor="middle" font-size="19.5" fill="#a2a2a2" letter-spacing="0.6">4.4</text>
<line x1="1739.7" y1="977" x2="1739.7" y2="989" stroke="#000" stroke-width="2"/>
<text x="1738.2" y="1007" text-anchor="middle" font-size="19.5" fill="#a2a2a2" letter-spacing="0.6">4.3</text>
<line x1="1783" y1="364.5" x2="1795.5" y2="364.5" stroke="#000" stroke-width="2"/>
<text x="1800" y="374.0" font-size="19.5" fill="#a2a2a2" letter-spacing="0.6">0.4</text>
<line x1="1783" y1="513.3" x2="1795.5" y2="513.3" stroke="#000" stroke-width="2"/>
<text x="1800" y="522.8" font-size="19.5" fill="#a2a2a2" letter-spacing="0.6">0.2</text>
<line x1="1783" y1="662.4" x2="1795.5" y2="662.4" stroke="#000" stroke-width="2"/>
<text x="1800" y="671.9" font-size="19.5" fill="#a2a2a2" letter-spacing="0.6">0.0</text>
<line x1="1783" y1="810.8" x2="1795.5" y2="810.8" stroke="#000" stroke-width="2"/>
<text x="1800" y="820.3" font-size="19.5" fill="#a2a2a2" letter-spacing="0.6">-0.2</text>
<line x1="1783" y1="959.5" x2="1795.5" y2="959.5" stroke="#000" stroke-width="2"/>
<text x="1800" y="969.0" font-size="19.5" fill="#a2a2a2" letter-spacing="0.6">-0.4</text>
</svg>
<!-- scrollbars -->
<div class="a chk" style="left:1845px;top:251px;width:28px;height:763px"></div>
<div class="a chk" style="left:484px;top:1014px;width:1361px;height:30px"></div>
<div class="a" style="left:1845px;top:1014px;width:28px;height:30px;background:#d6d3ce"></div>
<div class="raised2" style="left:1845px;top:251px;width:28px;height:29px"></div>
<svg style="left:1851px;top:262px" width="16" height="8" viewBox="0 0 16 8"><path d="M0 8 L8 0 L16 8 Z" fill="#403c38"/></svg>
<div class="raised2" style="left:1845px;top:986px;width:28px;height:28px"></div>
<svg style="left:1851px;top:996px" width="16" height="8" viewBox="0 0 16 8"><path d="M0 0 L8 8 L16 0 Z" fill="#403c38"/></svg>
<div class="raised2" style="left:1845px;top:557px;width:28px;height:14px"></div>
<div class="raised2" style="left:1815px;top:1014px;width:29px;height:30px"></div>
<svg style="left:1825px;top:1021px" width="8" height="16" viewBox="0 0 8 16"><path d="M0 0 L8 8 L0 16 Z" fill="#403c38"/></svg>
<div class="raised2" style="left:1119px;top:1014px;width:101px;height:30px"></div>
<!-- left-arrow -->
<div class="raised2" style="left:484px;top:1014px;width:29px;height:30px"></div>
<svg style="left:493px;top:1021px" width="8" height="16" viewBox="0 0 8 16"><path d="M8 0 L0 8 L8 16 Z" fill="#403c38"/></svg>
<!-- right toolbar panel -->
<div class="a" style="left:1874px;top:247px;width:75px;height:800px;background:#d6d3ce;border-left:3px solid #fff"></div>
<div class="rb" style="top:268px"></div>
<div class="rb" style="top:331px"></div>
<div class="rb" style="top:395px"></div>
<div class="rb" style="top:459px"></div>
<div class="rb" style="top:540px;height:63px"></div>
<div class="rb" style="top:622px"></div>
<div class="rb" style="top:686px"></div>
<div class="rb" style="top:750px"></div>
<div class="rb" style="top:813px"></div>
<div class="rb" style="top:877px"></div>
<!-- icons -->
<svg style="left:0;top:0" width="2048" height="1582" viewBox="0 0 2048 1582">
<defs>
<linearGradient id="gBlueV" x1="0" y1="0" x2="1" y2="0"><stop offset="0" stop-color="#7cc0ff"/><stop offset="0.5" stop-color="#3a8ee8"/><stop offset="1" stop-color="#1c62c8"/></linearGradient>
<linearGradient id="gBlueH" x1="0" y1="0" x2="0" y2="1"><stop offset="0" stop-color="#7cc0ff"/><stop offset="0.5" stop-color="#3a8ee8"/><stop offset="1" stop-color="#1c62c8"/></linearGradient>
<linearGradient id="gPane" x1="0" y1="0" x2="1" y2="1"><stop offset="0" stop-color="#f6f6ff"/><stop offset="1" stop-color="#cfcff8"/></linearGradient>
<linearGradient id="gYel" x1="0" y1="0" x2="0" y2="1"><stop offset="0" stop-color="#fbe24a"/><stop offset="1" stop-color="#fbd070"/></linearGradient>
<linearGradient id="gOrange" x1="0" y1="1" x2="1" y2="0"><stop offset="0" stop-color="#f05a18"/><stop offset="1" stop-color="#ffc020"/></linearGradient>
<linearGradient id="gRed" x1="0" y1="0" x2="0" y2="1"><stop offset="0" stop-color="#ff7a3a"/><stop offset="1" stop-color="#e8300c"/></linearGradient>
<radialGradient id="gLens" cx="0.35" cy="0.3" r="0.8"><stop offset="0" stop-color="#eefaff"/><stop offset="0.6" stop-color="#b4dcf2"/><stop offset="1" stop-color="#8cc4e4"/></radialGradient>
<radialGradient id="gGreen" cx="0.4" cy="0.3" r="0.8"><stop offset="0" stop-color="#6ee05c"/><stop offset="1" stop-color="#2fb427"/></radialGradient>
<radialGradient id="gBlueG" cx="0.4" cy="0.3" r="0.8"><stop offset="0" stop-color="#5cb4ff"/><stop offset="1" stop-color="#2a80dc"/></radialGradient>
<radialGradient id="gLav" cx="0.4" cy="0.35" r="0.8"><stop offset="0" stop-color="#d0d0f4"/><stop offset="1" stop-color="#8e8ed0"/></radialGradient>
</defs>
<g>
<path d="M117.6 204.5 L131.5 202.5 L132.5 195.5 L143 191.5 L156.5 191 L158.6 193.5 L158.2 217 L127.5 226.8 L124.4 225.8 Z" fill="#a3a1a1"/>
<path d="M124 192 L134.5 191 L133.5 199.5 L127.5 203 L121.5 203.2 Z" fill="#989696"/>
<path d="M131.5 205 L157 197 L157.6 216.6 L128.2 226 Z" fill="#b2b0b0" opacity="0.6"/>
<path d="M189 189.5 H222.5 Q225.5 189.5 225.5 192.5 V226 Q225.5 229 222.5 229 H192 L186 224 V192.5 Q186 189.5 189 189.5 Z" fill="#989696"/>
<rect x="193" y="191.5" width="26" height="17.5" fill="#aeacac"/>
<rect x="197" y="215.5" width="19" height="13.5" fill="#a8a6a6"/>
<rect x="200" y="218" width="5" height="9" fill="#939191"/>
<path d="M288.4 194.0 L284.1 201.4 L275.5 201.4 L271.2 194.0 L275.5 186.6 L284.1 186.6 Z" fill="#a3a1a1" stroke="#a3a1a1" stroke-width="1.5" stroke-linejoin="round"/>
<path d="M303.1 193.5 L298.8 200.9 L290.2 200.9 L285.9 193.5 L290.2 186.1 L298.8 186.1 Z" fill="#a3a1a1" stroke="#a3a1a1" stroke-width="1.5" stroke-linejoin="round"/>
<path d="M281.6 206.5 L277.3 213.9 L268.7 213.9 L264.4 206.5 L268.7 199.1 L277.3 199.1 Z" fill="#a3a1a1" stroke="#a3a1a1" stroke-width="1.5" stroke-linejoin="round"/>
<path d="M296.1 206.0 L291.8 213.4 L283.2 213.4 L278.9 206.0 L283.2 198.6 L291.8 198.6 Z" fill="#a3a1a1" stroke="#a3a1a1" stroke-width="1.5" stroke-linejoin="round"/>
<path d="M310.1 205.5 L305.8 212.9 L297.2 212.9 L292.9 205.5 L297.2 198.1 L305.8 198.1 Z" fill="#a3a1a1" stroke="#a3a1a1" stroke-width="1.5" stroke-linejoin="round"/>
<path d="M289.1 218.5 L284.8 225.9 L276.2 225.9 L271.9 218.5 L276.2 211.1 L284.8 211.1 Z" fill="#a3a1a1" stroke="#a3a1a1" stroke-width="1.5" stroke-linejoin="round"/>
<path d="M304.6 220.0 L300.3 227.4 L291.7 227.4 L287.4 220.0 L291.7 212.6 L300.3 212.6 Z" fill="#a3a1a1" stroke="#a3a1a1" stroke-width="1.5" stroke-linejoin="round"/>
<circle cx="287.5" cy="206" r="6" fill="#acacac"/>
<path d="M291 217 L300 214 L300 219 L309 222 L300.5 230.5 L298 226 L290 227 Z" fill="#989696"/>
<path d="M349.5 203.5 L355.5 222.5 L373.5 216.5 L371.8 213.2 L364 214 Q372 198 384 200.5 Q390 207 386 219.5 Q394.5 203 382.5 194.5 Q368.5 190.5 358.5 207.5 L353.8 202.5 Z" fill="#a3a1a1"/>
<path d="M455.2 203.5 L449.2 222.5 L431.2 216.5 L432.9 213.2 L440.7 214 Q432.7 198 420.7 200.5 Q414.7 207 418.7 219.5 Q410.2 203 422.2 194.5 Q436.2 190.5 446.2 207.5 L450.9 202.5 Z" fill="#a3a1a1"/>
<rect x="496.5" y="190.5" width="40" height="37" rx="3.5" fill="#2a98f4"/>
<rect x="498.5" y="192.5" width="36" height="3" fill="#8ccfff" opacity="0.7"/>
<rect x="498.7" y="198.5" width="10" height="26.5" fill="url(#gYel)"/>
<rect x="511.0" y="198.5" width="23" height="26.5" fill="url(#gPane)"/>
<path d="M500.7 205.1 L504.1 201.7 L506.1 205.1 Z" fill="#f05a20"/>
<path d="M500.7 210.4 L504.1 207.0 L506.1 210.4 Z" fill="#f05a20"/>
<path d="M500.7 215.7 L504.1 212.29999999999998 L506.1 215.7 Z" fill="#f05a20"/>
<path d="M524.5 217 L528.3 213.5 L532 218 L536.5 213.5 L540.2 217.3 L536 222 L540.6 227.2 L536.8 231 L531.8 226 L526.8 231 L523 227.2 L527.6 222 Z" fill="#f04a1c"/>
<rect x="563.8" y="190.5" width="40" height="37" rx="3.5" fill="#2a98f4"/>
<rect x="565.8" y="192.5" width="36" height="3" fill="#8ccfff" opacity="0.7"/>
<rect x="591.5999999999999" y="198.5" width="10" height="26.5" fill="url(#gYel)"/>
<rect x="566.3" y="198.5" width="23" height="26.5" fill="url(#gPane)"/>
<path d="M594.0 205.1 L597.4 201.7 L599.4 205.1 Z" fill="#f05a20"/>
<path d="M594.0 210.4 L597.4 207.0 L599.4 210.4 Z" fill="#f05a20"/>
<path d="M594.0 215.7 L597.4 212.29999999999998 L599.4 215.7 Z" fill="#f05a20"/>
<path d="M651 189.3 H672.3 L683.3 200.3 V228.60000000000002 H651 Z" fill="#b1afaf"/>
<circle cx="667" cy="213" r="8.5" fill="#a9a7a7"/>
<rect x="665.6" y="210.5" width="3.4" height="9" fill="#989696"/><rect x="663.5" y="218.2" width="7.6" height="1.8" fill="#989696"/><circle cx="667" cy="206.6" r="2" fill="#989696"/>
<rect x="733.4" y="189.3" width="32.2" height="39.3" fill="#b1afaf"/>
<path d="M735 219 H742.5 L744.5 202 L746.5 219 H754 L756.5 208 L758.5 219 H764.5 V222 H735 Z" fill="#a09e9e"/>
<path d="M758 190 H763 V194.5 H769 V199.5 H763 V204.5 H758 V199.5 H753 V194.5 H758 Z" fill="#9c9a9a"/>
<path d="M800.8 189.3 H820.4 L832.4 201.3 V228.60000000000002 H800.8 Z" fill="#b1afaf"/>
<path d="M803 219 H809.5 L811.5 203 L813.5 219 H820 L822 211 L824 219 H830 V222 H803 Z" fill="#a09e9e"/>
<path d="M835.5 219.6 L839.0 220.8 L838.1 223.8 L834.5 222.8 L833.1 224.3 L834.4 227.7 L831.5 228.9 L830.1 225.5 L828.0 225.3 L826.2 228.5 L823.4 226.9 L825.2 223.7 L824.0 222.0 L820.4 222.5 L819.9 219.3 L823.6 218.7 L824.2 216.8 L821.5 214.2 L823.7 211.9 L826.4 214.4 L828.3 213.6 L828.6 209.9 L831.8 210.2 L831.6 213.9 L833.3 214.9 L836.4 212.8 L838.2 215.5 L835.2 217.6 Z" fill="#9e9c9c"/>
<line x1="1896" y1="277.5" x2="1896" y2="318.5" stroke="#1a44ae" stroke-width="2.2"/>
<line x1="1927" y1="277.5" x2="1927" y2="318.5" stroke="#1a44ae" stroke-width="2.2"/>
<line x1="1891.5" y1="282.7" x2="1932" y2="282.7" stroke="#1a44ae" stroke-width="2.2"/>
<line x1="1891.5" y1="313.5" x2="1932" y2="313.5" stroke="#1a44ae" stroke-width="2.2"/>
<path d="M1905.2 290.5 L1911.6 284 L1918 290.5 Z" fill="#f4c414" stroke="#e0a800" stroke-width="0.8"/>
<path d="M1905.2 305.8 L1911.6 312.3 L1918 305.8 Z" fill="#f4c414" stroke="#e0a800" stroke-width="0.8"/>
<path d="M1904.3 291.8 L1897.8 298.1 L1904.3 304.4 Z" fill="#f4c414" stroke="#e0a800" stroke-width="0.8"/>
<path d="M1918.9 291.8 L1925.4 298.1 L1918.9 304.4 Z" fill="#f4c414" stroke="#e0a800" stroke-width="0.8"/>
<line x1="1915" y1="364" x2="1928.5" y2="377" stroke="#f09a30" stroke-width="6" stroke-linecap="round"/>
<line x1="1917" y1="363.5" x2="1929" y2="375" stroke="#ffe08a" stroke-width="1.6"/>
<circle cx="1928.2" cy="376.8" r="2.6" fill="#c8c8c8"/>
<circle cx="1905.2" cy="353.2" r="11.6" fill="url(#gLens)" stroke="#94a4b0" stroke-width="1.8"/>
<path d="M1893.2 371 L1903.5 361.5 V366.5 H1914 V375.5 H1903.5 V380.5 Z" fill="url(#gRed)"/>
<line x1="1914" y1="429" x2="1926.5" y2="441.5" stroke="#a3a1a1" stroke-width="6.5" stroke-linecap="butt"/>
<circle cx="1903.6" cy="419" r="12.3" fill="#a3a1a1"/>
<path d="M1929.4 415.8 L1919 406 V411 H1908.5 V420.5 H1919 V425.5 Z" fill="#9a9898"/>
<rect x="1891.2" y="470" width="40.5" height="37.2" rx="3.5" fill="#2a98f4"/>
<rect x="1893.2" y="472" width="36.5" height="3" fill="#8ccfff" opacity="0.7"/>
<rect x="1893.6" y="478" width="35.7" height="27" fill="url(#gPane)"/>
<line x1="1917" y1="498" x2="1926.5" y2="507" stroke="#f09a30" stroke-width="4.6" stroke-linecap="round"/>
<circle cx="1909.8" cy="490.6" r="8.6" fill="url(#gLens)" stroke="#8e9aa4" stroke-width="1.8"/>
<rect x="1893.3" y="553" width="36.3" height="36" fill="#adabab"/>
<rect x="1904" y="553" width="16" height="36" fill="#a3a1a1"/>
<rect x="1901.5" y="553" width="1.5" height="36" fill="#b6b4b4"/><rect x="1921" y="553" width="1.5" height="36" fill="#b6b4b4"/>
<path d="M1903.2 631.8 L1916.2 645.3 H1908.8 V659.7 H1916.2 L1903.2 673.2 L1890.2 659.7 H1897.6000000000001 V645.3 H1890.2 Z" fill="url(#gBlueV)"/>
<path d="M1904.5 664.5 L1908.5 652 L1905.8 651 L1913.5 641.5 L1928.3 640.3 L1927 655 L1921 651.5 L1917.5 657.5 L1914.5 656 L1912 661.5 Z" fill="url(#gOrange)"/>
<path d="M1903.2 695.7 L1916.2 709.2 H1908.8 V723.1 H1916.2 L1903.2 736.6 L1890.2 723.1 H1897.6000000000001 V709.2 H1890.2 Z" fill="url(#gBlueV)"/>
<path d="M1919.5 707.1999999999999 H1925.6999999999998 V713.3 H1931.8 V719.5 H1925.6999999999998 V725.6 H1919.5 V719.5 H1913.3999999999999 V713.3 H1919.5 Z" fill="#3fc626" stroke="#228a12" stroke-width="1.6" stroke-linejoin="round"/>
<path d="M1903.3 759.5 L1916.3 773.0 H1908.8999999999999 V787.1 H1916.3 L1903.3 800.6 L1890.3 787.1 H1897.7 V773.0 H1890.3 Z" fill="url(#gBlueV)"/>
<rect x="1912.7" y="777.1" width="19" height="6" rx="1" fill="#f05018" stroke="#d03008" stroke-width="1"/>
<path d="M1891.6 835.8 L1905.1 823.8 V830.4 H1918.3 V823.8 L1931.8 835.8 L1918.3 847.8 V841.1999999999999 H1905.1 V847.8 Z" fill="url(#gBlueH)"/>
<path d="M1908.2 845.5999999999999 H1914.3999999999999 V851.6999999999999 H1920.5 V857.9 H1914.3999999999999 V864.0 H1908.2 V857.9 H1902.1 V851.6999999999999 H1908.2 Z" fill="#3fc626" stroke="#228a12" stroke-width="1.6" stroke-linejoin="round"/>
<path d="M1891.6 899.7 L1905.1 887.7 V894.3000000000001 H1918.3 V887.7 L1931.8 899.7 L1918.3 911.7 V905.1 H1905.1 V911.7 Z" fill="url(#gBlueH)"/>
<rect x="1902.1" y="917.2" width="19" height="6" rx="1" fill="#f05018" stroke="#d03008" stroke-width="1"/>
<path d="M154.5 278.3 L158.9 279.5 L158.3 282.4 L153.8 281.8 L152.9 283.5 L156.2 286.8 L154.2 289.0 L150.6 286.2 L149.0 287.2 L150.1 291.7 L147.4 292.6 L145.6 288.4 L143.7 288.5 L142.5 292.9 L139.6 292.3 L140.2 287.8 L138.5 286.9 L135.2 290.2 L133.0 288.2 L135.8 284.6 L134.8 283.0 L130.3 284.1 L129.4 281.4 L133.6 279.6 L133.5 277.7 L129.1 276.5 L129.7 273.6 L134.2 274.2 L135.1 272.5 L131.8 269.2 L133.8 267.0 L137.4 269.8 L139.0 268.8 L137.9 264.3 L140.6 263.4 L142.4 267.6 L144.3 267.5 L145.5 263.1 L148.4 263.7 L147.8 268.2 L149.5 269.1 L152.8 265.8 L155.0 267.8 L152.2 271.4 L153.2 273.0 L157.7 271.9 L158.6 274.6 L154.4 276.4 Z M148.2 278.0 A4.2 4.2 0 1 0 139.8 278.0 A4.2 4.2 0 1 0 148.2 278.0 Z" fill="url(#gLav)" stroke="#7a7ab8" stroke-width="1"/>
<circle cx="128.3" cy="262.6" r="11.4" fill="url(#gLens)" stroke="#a4aab4" stroke-width="2"/>
<path d="M122.8 258.5 L128.6 264.3 L133.6 259.6" fill="none" stroke="#202838" stroke-width="2.2" stroke-linejoin="round"/>
<path d="M177.2 350.8 L181.2 352.2 L180.6 356.8 L176.3 357.1 L175.7 358.7 L178.5 361.8 L175.7 365.6 L171.8 363.7 L170.5 364.7 L171.4 368.9 L167.0 370.7 L164.7 367.1 L163.0 367.4 L161.6 371.4 L157.0 370.8 L156.7 366.5 L155.1 365.9 L152.0 368.7 L148.2 365.9 L150.1 362.0 L149.1 360.7 L144.9 361.6 L143.1 357.2 L146.7 354.9 L146.4 353.2 L142.4 351.8 L143.0 347.2 L147.3 346.9 L147.9 345.3 L145.1 342.2 L147.9 338.4 L151.8 340.3 L153.1 339.3 L152.2 335.1 L156.6 333.3 L158.9 336.9 L160.6 336.6 L162.0 332.6 L166.6 333.2 L166.9 337.5 L168.5 338.1 L171.6 335.3 L175.4 338.1 L173.5 342.0 L174.5 343.3 L178.7 342.4 L180.5 346.8 L176.9 349.1 Z M166.4 352.0 A4.6 4.6 0 1 0 157.2 352.0 A4.6 4.6 0 1 0 166.4 352.0 Z" fill="url(#gGreen)" stroke="#2aa022" stroke-width="2" stroke-linejoin="round"/>
<path d="M177.2 405.3 L181.2 406.7 L180.6 411.3 L176.3 411.6 L175.7 413.2 L178.5 416.3 L175.7 420.1 L171.8 418.2 L170.5 419.2 L171.4 423.4 L167.0 425.2 L164.7 421.6 L163.0 421.9 L161.6 425.9 L157.0 425.3 L156.7 421.0 L155.1 420.4 L152.0 423.2 L148.2 420.4 L150.1 416.5 L149.1 415.2 L144.9 416.1 L143.1 411.7 L146.7 409.4 L146.4 407.7 L142.4 406.3 L143.0 401.7 L147.3 401.4 L147.9 399.8 L145.1 396.7 L147.9 392.9 L151.8 394.8 L153.1 393.8 L152.2 389.6 L156.6 387.8 L158.9 391.4 L160.6 391.1 L162.0 387.1 L166.6 387.7 L166.9 392.0 L168.5 392.6 L171.6 389.8 L175.4 392.6 L173.5 396.5 L174.5 397.8 L178.7 396.9 L180.5 401.3 L176.9 403.6 Z M166.4 406.5 A4.6 4.6 0 1 0 157.2 406.5 A4.6 4.6 0 1 0 166.4 406.5 Z" fill="url(#gBlueG)" stroke="#2474cc" stroke-width="2" stroke-linejoin="round"/>
<path d="M177.2 459.8 L181.2 461.2 L180.6 465.8 L176.3 466.1 L175.7 467.7 L178.5 470.8 L175.7 474.6 L171.8 472.7 L170.5 473.7 L171.4 477.9 L167.0 479.7 L164.7 476.1 L163.0 476.4 L161.6 480.4 L157.0 479.8 L156.7 475.5 L155.1 474.9 L152.0 477.7 L148.2 474.9 L150.1 471.0 L149.1 469.7 L144.9 470.6 L143.1 466.2 L146.7 463.9 L146.4 462.2 L142.4 460.8 L143.0 456.2 L147.3 455.9 L147.9 454.3 L145.1 451.2 L147.9 447.4 L151.8 449.3 L153.1 448.3 L152.2 444.1 L156.6 442.3 L158.9 445.9 L160.6 445.6 L162.0 441.6 L166.6 442.2 L166.9 446.5 L168.5 447.1 L171.6 444.3 L175.4 447.1 L173.5 451.0 L174.5 452.3 L178.7 451.4 L180.5 455.8 L176.9 458.1 Z M166.4 461.0 A4.6 4.6 0 1 0 157.2 461.0 A4.6 4.6 0 1 0 166.4 461.0 Z" fill="url(#gGreen)" stroke="#2aa022" stroke-width="2" stroke-linejoin="round"/>
</g>
<text x="141.3" y="373.0" font-family="'Liberation Sans',sans-serif" font-weight="bold" font-style="italic" font-size="25.5" textLength="27" lengthAdjust="spacingAndGlyphs" fill="#0a0a0a" stroke="#0a0a0a" stroke-width="0.7">PC</text>
<text x="141.3" y="427.5" font-family="'Liberation Sans',sans-serif" font-weight="bold" font-style="italic" font-size="25.5" textLength="27" lengthAdjust="spacingAndGlyphs" fill="#0a0a0a" stroke="#0a0a0a" stroke-width="0.7">BC</text>
<text x="141.3" y="482.0" font-family="'Liberation Sans',sans-serif" font-weight="bold" font-style="italic" font-size="25.5" textLength="27" lengthAdjust="spacingAndGlyphs" fill="#0a0a0a" stroke="#0a0a0a" stroke-width="0.7">PC</text>
</svg>
<!-- splitter arrows -->
<svg style="left:484px;top:1048px" width="36" height="8" viewBox="0 0 36 8"><path d="M1 7 L6.5 1 L12 7 Z M22 1 L33 1 L27.5 7 Z" fill="#000"/></svg>
<!-- lower panel -->
<div class="a" style="left:476px;top:1054.7px;width:1476px;height:347.3px;border-style:solid;border-width:2.3px 3px 4px 4px;border-color:#504c4a #fff #fff #5a5856"></div>
<div class="t" style="left:764.5px;top:1149px;line-height:24px;letter-spacing:0.1px">Remove the following region from this spectrum:</div>
<div class="a" style="left:811px;top:1201px;width:113px;height:35px;background:#fff;border-style:solid;border-width:2px;border-color:#807c78 #fff #fff #807c78;box-shadow:inset 2px 2px 0 #484440"></div>
<div class="t" style="left:816px;top:1207px;line-height:24px">5.01177</div>
<div class="t" style="left:930.5px;top:1207px;line-height:24px">to</div>
<div class="a" style="left:956px;top:1201px;width:113px;height:35px;background:#fff;border-style:solid;border-width:2px;border-color:#807c78 #fff #fff #807c78;box-shadow:inset 2px 2px 0 #484440"></div>
<div class="t" style="left:961px;top:1207px;line-height:24px">4.53699</div>
<div class="t" style="left:1077.5px;top:1207px;line-height:24px">ppm</div>
<!-- info icon + hint -->
<svg style="left:499px;top:1352px" width="28" height="28" viewBox="0 0 28 28">
  <defs><radialGradient id="gInfo" cx="0.4" cy="0.3" r="0.8"><stop offset="0" stop-color="#6db4ff"/><stop offset="0.6" stop-color="#1b6fe0"/><stop offset="1" stop-color="#0a3fa8"/></radialGradient></defs>
  <circle cx="14" cy="14" r="13" fill="url(#gInfo)"/>
  <rect x="12" y="5.5" width="4.2" height="11" rx="1.5" fill="#fff"/>
  <rect x="12" y="18.5" width="4.2" height="4.2" rx="1.5" fill="#fff"/>
</svg>
<div class="t" style="left:534px;top:1354px;line-height:24px">Click 'Accept' or 'Cancel' to continue.</div>
<!-- Accept / Cancel -->
<div class="raised" style="left:1184px;top:1346px;width:137px;height:42px"></div>
<div class="raised" style="left:1330px;top:1346px;width:136px;height:42px"></div>
<div class="t" style="left:1184px;top:1354px;width:135px;text-align:center;line-height:24px">Accept</div>
<div class="t" style="left:1330px;top:1354px;width:134px;text-align:center;line-height:24px">Cancel</div>
<!-- overview panel -->
<div class="a" style="left:1475px;top:1058px;width:472px;height:337px;background:#fff;border-style:solid;border-width:2px 2px 2px 3px;border-color:#807c78 #e4e2e0 #e4e2e0 #6a6866"></div>
<svg style="left:1478px;top:1060px" width="467" height="333" viewBox="1478 1060 467 333">
  <line x1="1478" y1="1194" x2="1945" y2="1194" stroke="#000" stroke-width="1.8"/>
  <line x1="1712.3" y1="1070" x2="1712.3" y2="1385.5" stroke="#000" stroke-width="1.8"/>
  <line x1="1710.6" y1="1171" x2="1710.6" y2="1194" stroke="#000" stroke-width="2.4"/>
  <line x1="1897.5" y1="1189" x2="1897.5" y2="1194" stroke="#000" stroke-width="1.6"/>
  <rect x="1693" y="1191" width="40.5" height="6" fill="#d01818"/>
  <rect x="1716" y="1192.7" width="13" height="2.4" fill="#f8c8c8"/>
  <line x1="1712.3" y1="1189" x2="1712.3" y2="1200" stroke="#400" stroke-width="1.8" opacity="0.55"/>
</svg>
<!-- status bar -->
<div class="a" style="left:104px;top:1401px;width:1847px;height:1.5px;background:#8a8886"></div>
<div class="a" style="left:1394px;top:1407px;width:2px;height:24px;background:#fff;border-left:1px solid #8e8c8a"></div>
<div class="a" style="left:1575px;top:1407px;width:2px;height:24px;background:#fff;border-left:1px solid #8e8c8a"></div>
<div class="a" style="left:1713px;top:1407px;width:2px;height:24px;background:#fff;border-left:1px solid #8e8c8a"></div>
<div class="t" style="left:1434px;top:1407px;line-height:24px;letter-spacing:0.15px">499.83 MHz</div>
<div class="t" style="left:1610px;top:1407px;line-height:24px">pH 7.00</div>
<div class="t" style="left:1754px;top:1407px;line-height:24px;letter-spacing:0.27px">4.477 ppm, -0.190 si</div>
</div>
<!-- slide annotation text box -->
<div class="a" style="left:445px;top:516px;width:444.5px;height:527px;background:rgba(255,255,255,0.865)"></div>
<div class="a" style="left:0;top:0;width:2048px;height:1582px;font-family:'DejaVu Sans','Liberation Sans',sans-serif;font-size:69.6px;line-height:86px;color:#000;-webkit-text-stroke:1.2px #000">
<span class="t" style="left:165.5px;top:526.4px;line-height:86px;letter-spacing:5.53px">You </span>
<span class="t" style="left:320.8px;top:526.4px;line-height:86px;letter-spacing:-2.30px">can </span>
<span class="t" style="left:466.2px;top:526.4px;line-height:86px;letter-spacing:-0.60px">click </span>
<span class="t" style="left:646.5px;top:526.4px;line-height:86px;letter-spacing:-0.93px">and </span>
<span class="t" style="left:163.0px;top:611.9px;line-height:86px;letter-spacing:0.49px">drag </span>
<span class="t" style="left:349.2px;top:611.9px;line-height:86px;letter-spacing:-3.60px">the </span>
<span class="t" style="left:482.2px;top:611.9px;line-height:86px;letter-spacing:-0.84px">blue </span>
<span class="t" style="left:657.3px;top:611.9px;line-height:86px;letter-spacing:1.29px">lines/ </span>
<span class="t" style="left:162.2px;top:697.5px;line-height:86px;letter-spacing:0.94px">region </span>
<span class="t" style="left:412.0px;top:697.5px;line-height:86px;letter-spacing:-1.68px">or </span>
<span class="t" style="left:510.3px;top:697.5px;line-height:86px;letter-spacing:-2.98px">type </span>
<span class="t" style="left:682.2px;top:697.5px;line-height:86px;letter-spacing:1.06px">in </span>
<span class="t" style="left:162.5px;top:782.9px;line-height:86px;letter-spacing:-0.61px">values. </span>
<span class="t" style="left:162.2px;top:868.4px;line-height:86px;letter-spacing:4.14px">No </span>
<span class="t" style="left:284.5px;top:868.4px;line-height:86px;letter-spacing:-1.21px">peaks </span>
<span class="t" style="left:511.9px;top:868.4px;line-height:86px;letter-spacing:0.38px">inside </span>
<span class="t" style="left:162.9px;top:953.9px;line-height:86px;letter-spacing:-0.61px">blue </span>
<span class="t" style="left:337.8px;top:953.9px;line-height:86px;letter-spacing:-1.55px">area, </span>
<span class="t" style="left:532.9px;top:953.9px;line-height:86px;letter-spacing:-1.46px">accept!</span>
</div>
<!-- annotation ellipses -->
<svg style="left:0;top:0" width="2048" height="1582" viewBox="0 0 2048 1582">
  <ellipse cx="957.5" cy="1210" rx="205" ry="66" fill="none" stroke="#f0300e" stroke-width="5"/>
  <ellipse cx="1251.4" cy="1364.4" rx="95.6" ry="41.6" fill="none" stroke="#96d35a" stroke-width="4"/>
</svg>
</body>
</html>
